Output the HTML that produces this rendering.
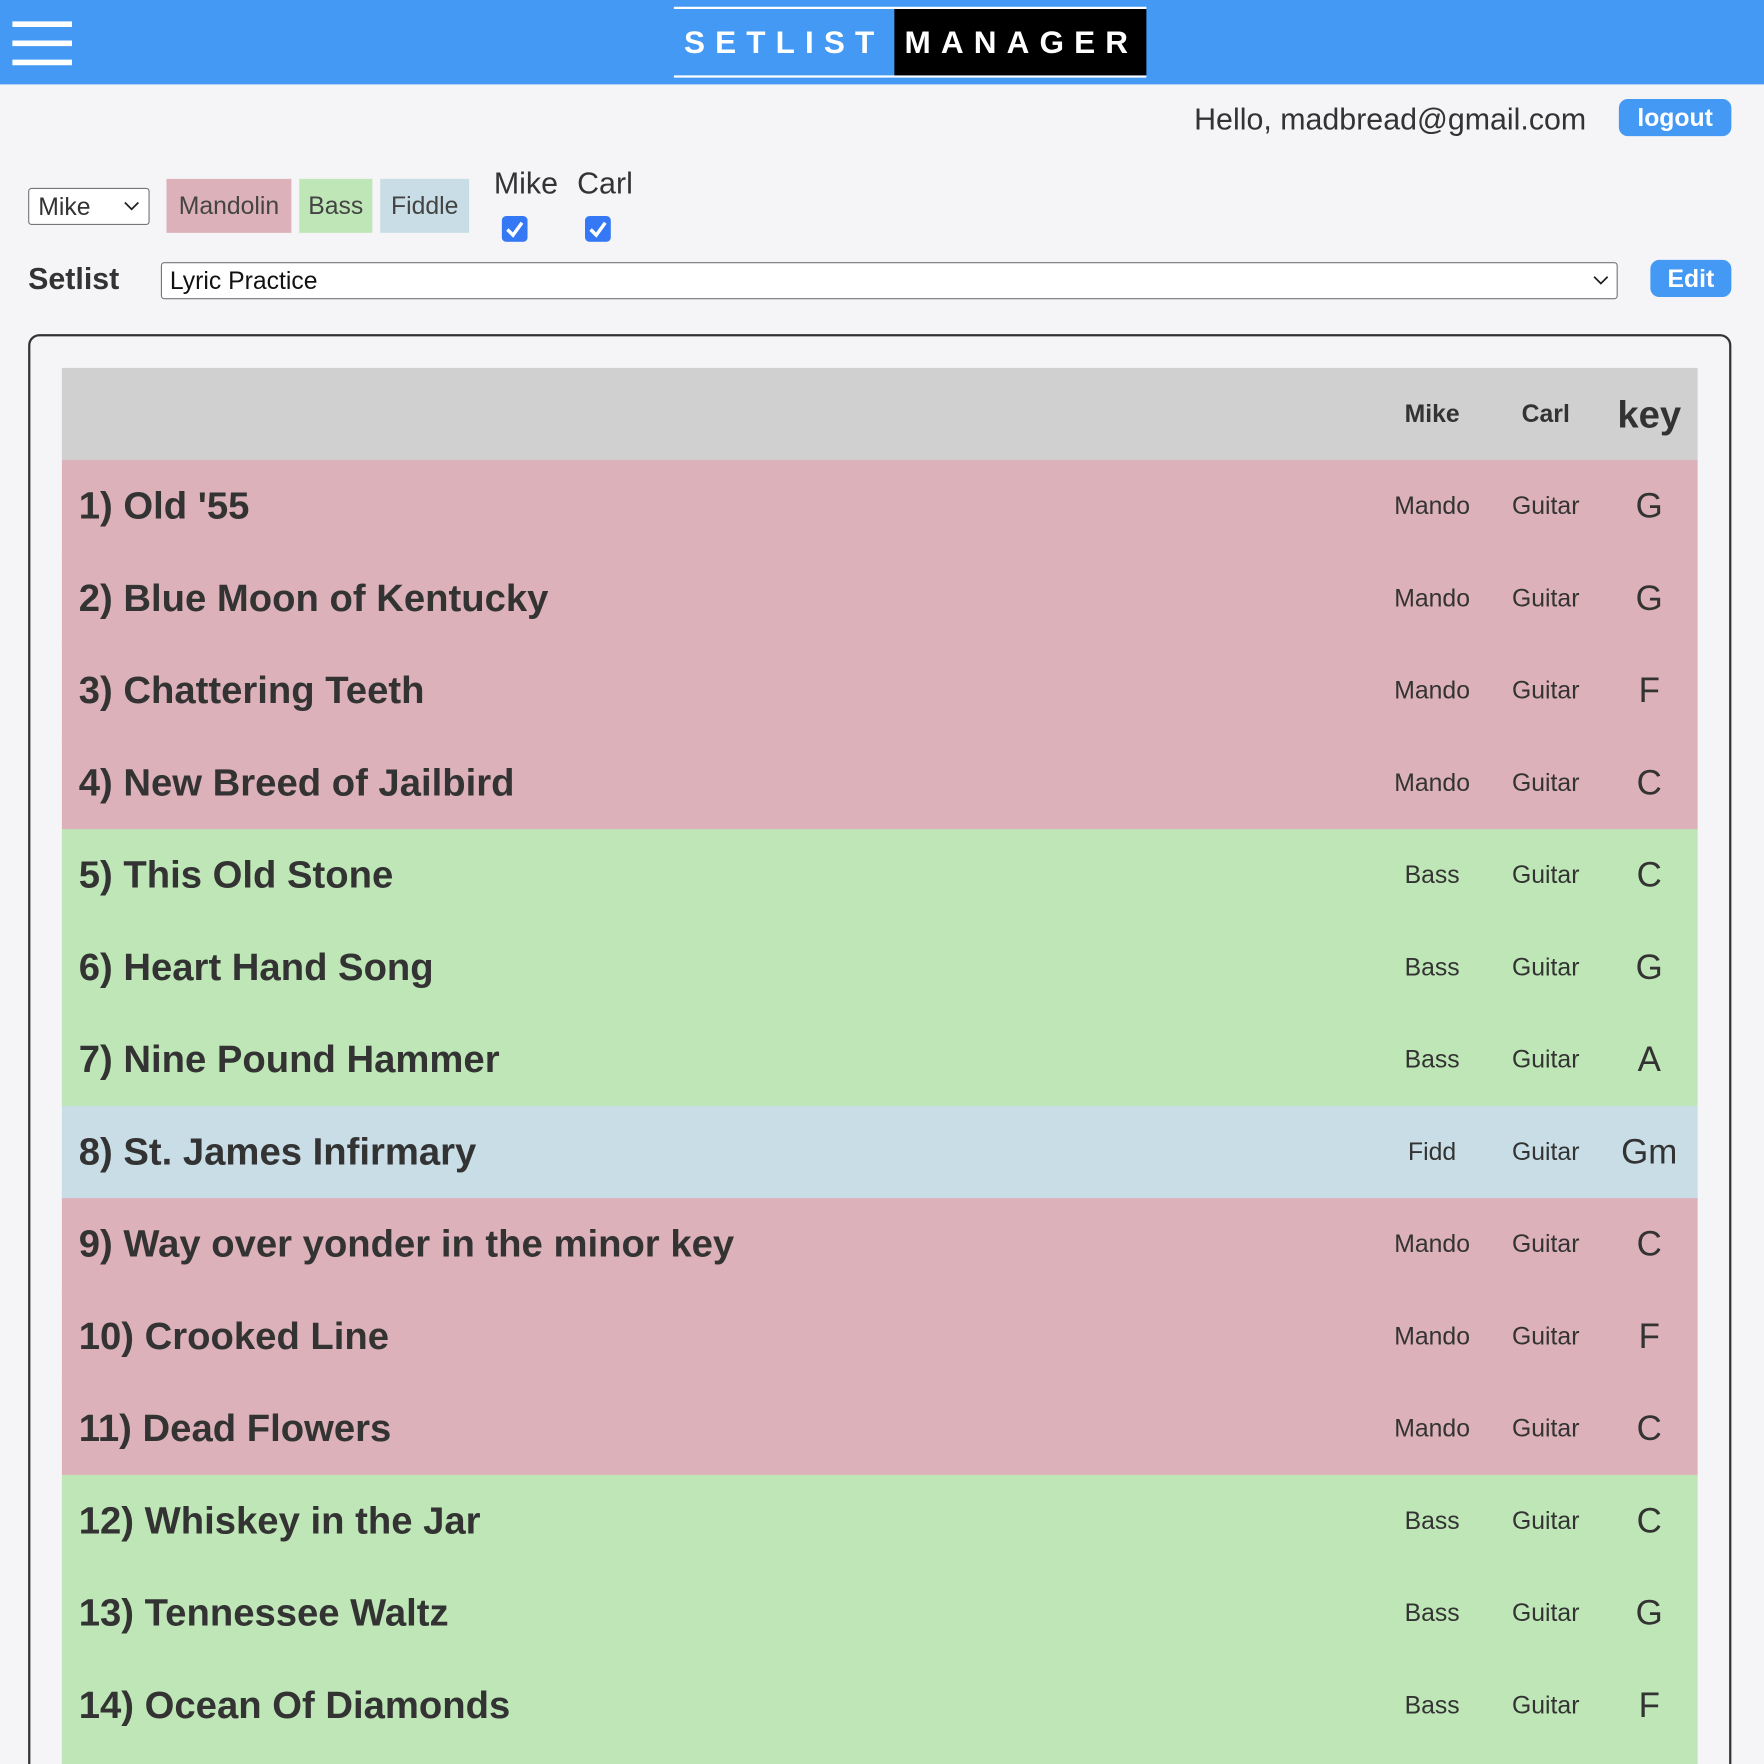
<!DOCTYPE html>
<html><head><meta charset="utf-8"><style>
html,body{margin:0;padding:0;width:1764px;height:1764px;overflow:hidden;background:#F5F4F7}
#w{position:absolute;left:0;top:0;width:1568px;height:1568px;overflow:hidden;transform:scale(1.125);transform-origin:0 0;font-family:"Liberation Sans",sans-serif;color:#333}
.a{position:absolute}
.hb{left:11px;width:53px;height:5px;background:#fff}
.chip{top:159px;height:48px;line-height:48px;font-size:22px;text-align:center;color:#444}
.row{position:absolute;left:55px;width:1454px;height:83px}
.row .t{position:absolute;left:15px;top:0;line-height:82px;font-size:34px;font-weight:bold;color:#333}
.row .m,.row .c,.row .k{position:absolute;top:0;line-height:82px;text-align:center;font-size:22px;color:#333}
.row .m{left:1168px;width:100px}
.row .c{left:1269px;width:100px}
.row .k{left:1371px;width:80px;font-size:31px}
.pk{background:#DCB1B9}.gr{background:#BEE6B6}.bl{background:#C8DDE6}
</style></head><body><div id="w">
<div class="a" style="left:0;top:0;width:1568px;height:75px;background:#4399F3"></div>
<div class="a hb" style="top:19px"></div><div class="a hb" style="top:36px"></div><div class="a hb" style="top:53px"></div>
<div class="a" style="left:599px;top:6px;width:420px;height:2px;background:#fff"></div>
<div class="a" style="left:599px;top:67px;width:420px;height:2px;background:#fff"></div>
<div class="a" style="left:795px;top:8px;width:224px;height:59px;background:#000"></div>
<div class="a" style="left:608px;top:8px;line-height:59px;font-size:28px;font-weight:bold;color:#fff;letter-spacing:9px">SETLIST</div>
<div class="a" style="left:804px;top:8px;line-height:59px;font-size:28px;font-weight:bold;color:#fff;letter-spacing:9px">MANAGER</div>
<div class="a" style="left:1000px;width:410px;top:88px;line-height:36px;font-size:27px;text-align:right;color:#333">Hello, madbread@gmail.com</div>
<div class="a" style="left:1439px;top:88px;width:100px;height:33px;border-radius:8px;background:#4399F3;color:#fff;font-weight:bold;font-size:22px;line-height:33px;text-align:center">logout</div>
<div class="a" style="left:25px;top:167px;width:106px;height:31px;border:1px solid #767676;border-radius:3px;background:#fff;font-size:22px;line-height:31px;box-sizing:content-box"><span style="padding-left:8px">Mike</span><svg class="a" style="left:84px;top:11px" width="14" height="9"><path d="M1 1 L7 7 L13 1" stroke="#222" stroke-width="1.6" fill="none"/></svg></div>
<div class="a chip pk" style="left:148px;width:111px">Mandolin</div>
<div class="a chip gr" style="left:266px;width:65px">Bass</div>
<div class="a chip bl" style="left:338px;width:79px">Fiddle</div>
<div class="a" style="left:439px;top:146px;font-size:27px;line-height:34px">Mike</div>
<div class="a" style="left:513px;top:146px;font-size:27px;line-height:34px">Carl</div>
<svg class="a" style="left:446px;top:192px" width="23" height="23"><rect width="23" height="23" rx="4" fill="#3478F6"/><path d="M5 12 L10 17 L18 6" stroke="#fff" stroke-width="3" fill="none"/></svg>
<svg class="a" style="left:520px;top:192px" width="23" height="23"><rect width="23" height="23" rx="4" fill="#3478F6"/><path d="M5 12 L10 17 L18 6" stroke="#fff" stroke-width="3" fill="none"/></svg>
<div class="a" style="left:25px;top:231px;font-size:27px;font-weight:bold;line-height:34px">Setlist</div>
<div class="a" style="left:143px;top:233px;width:1293px;height:31px;border:1px solid #767676;border-radius:3px;background:#fff;font-size:22px;line-height:31px"><span style="padding-left:7px;color:#111">Lyric Practice</span><svg class="a" style="left:1272px;top:11px" width="14" height="9"><path d="M1 1 L7 7 L13 1" stroke="#222" stroke-width="1.6" fill="none"/></svg></div>
<div class="a" style="left:1467px;top:231px;width:72px;height:33px;border-radius:8px;background:#4399F3;color:#fff;font-weight:bold;font-size:22px;line-height:33px;text-align:center">Edit</div>
<div class="a" style="left:25px;top:297px;width:1510px;height:1300px;border:2px solid #333;border-radius:10px"></div>
<div class="row" style="top:327px;background:#D0D0D0"><div class="m" style="font-weight:bold">Mike</div><div class="c" style="font-weight:bold">Carl</div><div class="k" style="font-weight:bold;font-size:34px;line-height:84px">key</div></div>
<div class="row pk" style="top:409px"><div class="t">1) Old '55</div><div class="m">Mando</div><div class="c">Guitar</div><div class="k">G</div></div>
<div class="row pk" style="top:491px"><div class="t">2) Blue Moon of Kentucky</div><div class="m">Mando</div><div class="c">Guitar</div><div class="k">G</div></div>
<div class="row pk" style="top:573px"><div class="t">3) Chattering Teeth</div><div class="m">Mando</div><div class="c">Guitar</div><div class="k">F</div></div>
<div class="row pk" style="top:655px"><div class="t">4) New Breed of Jailbird</div><div class="m">Mando</div><div class="c">Guitar</div><div class="k">C</div></div>
<div class="row gr" style="top:737px"><div class="t">5) This Old Stone</div><div class="m">Bass</div><div class="c">Guitar</div><div class="k">C</div></div>
<div class="row gr" style="top:819px"><div class="t">6) Heart Hand Song</div><div class="m">Bass</div><div class="c">Guitar</div><div class="k">G</div></div>
<div class="row gr" style="top:901px"><div class="t">7) Nine Pound Hammer</div><div class="m">Bass</div><div class="c">Guitar</div><div class="k">A</div></div>
<div class="row bl" style="top:983px"><div class="t">8) St. James Infirmary</div><div class="m">Fidd</div><div class="c">Guitar</div><div class="k">Gm</div></div>
<div class="row pk" style="top:1065px"><div class="t">9) Way over yonder in the minor key</div><div class="m">Mando</div><div class="c">Guitar</div><div class="k">C</div></div>
<div class="row pk" style="top:1147px"><div class="t">10) Crooked Line</div><div class="m">Mando</div><div class="c">Guitar</div><div class="k">F</div></div>
<div class="row pk" style="top:1229px"><div class="t">11) Dead Flowers</div><div class="m">Mando</div><div class="c">Guitar</div><div class="k">C</div></div>
<div class="row gr" style="top:1311px"><div class="t">12) Whiskey in the Jar</div><div class="m">Bass</div><div class="c">Guitar</div><div class="k">C</div></div>
<div class="row gr" style="top:1393px"><div class="t">13) Tennessee Waltz</div><div class="m">Bass</div><div class="c">Guitar</div><div class="k">G</div></div>
<div class="row gr" style="top:1475px;height:93px"><div class="t">14) Ocean Of Diamonds</div><div class="m">Bass</div><div class="c">Guitar</div><div class="k">F</div></div>
</div></body></html>
